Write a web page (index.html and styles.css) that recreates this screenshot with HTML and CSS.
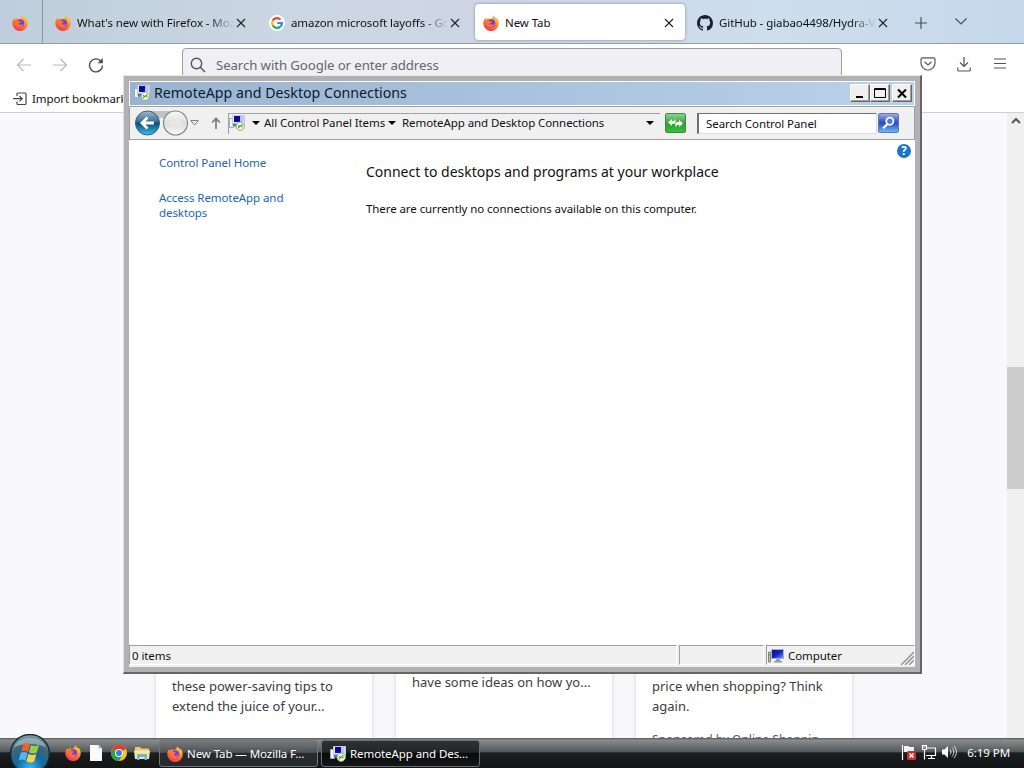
FILE: index.html
```
<!DOCTYPE html>
<html lang="en">
<head>
    <meta charset="UTF-8">
    <meta name="viewport" content="width=device-width, initial-scale=1.0">
    <title>New Tab</title>
    <link rel="stylesheet" href="styles.css">
</head>
<body>
    <!-- shared icons -->
    <svg class="defs" width="0" height="0">
        <defs>
            <linearGradient id="fox" x1="0.8" y1="0" x2="0.3" y2="1">
                <stop offset="0" stop-color="#ffd93b"/>
                <stop offset="0.45" stop-color="#ff8a2a"/>
                <stop offset="1" stop-color="#f0305c"/>
            </linearGradient>
            <linearGradient id="screen" x1="0" y1="0" x2="1" y2="1">
                <stop offset="0" stop-color="#0a0a9a"/>
                <stop offset="0.5" stop-color="#1420b8"/>
                <stop offset="1" stop-color="#7f9bf0"/>
            </linearGradient>
        </defs>
        <symbol id="firefox" viewBox="0 0 16 16">
            <path d="M2.2 3.2 3.6 4.4C4.4 3.4 5 3 5.7 2.9L6 4.2 9.5 3C9.4 1.8 9.8.9 10.6.3c.3 1.6 1.5 2 2.6 3.2.2-.3.2-.6.2-1C15 4.2 15.8 6 15.8 8.3A7.7 7.7 0 0 1 .3 8.4C.3 6.3 1 4.5 2.2 3.2z" fill="url(#fox)"/>
            <circle cx="8.3" cy="8.2" r="3.9" fill="#7542d5"/>
            <path d="M2.8 5.8c1.6-.9 3.3-.6 4.3.5l1.8.2c.1.9-.8 1.1-1.9 1.4-.5 1.2.6 2.2 2 1.9 1.1-.1 1.6-.8 2.5-.4-.8 2-2.6 3.1-4.7 2.7-2.5-.4-4.2-2.7-4-6.3z" fill="#ff7134"/>
            <path d="M9.2 3.3c3 .4 4.2 2.6 3.6 5.4 1.2-1.3 1.3-3.5.3-5.2L10.5 1z" fill="#ffb52e"/>
        </symbol>
        <symbol id="remote" viewBox="0 0 16 16">
            <path d="M.5 3.500h4v9h-4z" fill="#f2f4f8" stroke="#a3abba"/>
            <path d="M3.500.5h12v10h-12z" fill="#e8ebf2" stroke="#c3c9d6"/>
            <path d="M5 1h6v6H5z" fill="#0a0a9c"/>
            <path d="M11 1h3.500v6H11z" fill="#b9c4ee"/>
            <path d="M4 8.500h5v3H4z" fill="#5670cc"/>
            <circle cx="11.200" cy="11.200" r="4.200" fill="#f2f8ec" stroke="#84ab6c"/>
            <path d="m9 10.300 1.700 1.300L9 13m4.500-3.700-1.700 1.400 1.700 1.400" fill="none" stroke="#3f9c20" stroke-width="1.100"/>
        </symbol>
        <symbol id="close" viewBox="0 0 10 10">
            <path d="m1 1 8 8m0-8-8 8" stroke="#222" stroke-width="1.1"/>
        </symbol>
        <symbol id="down" viewBox="0 0 8 4">
            <path d="M0 0h8L4 4z"/>
        </symbol>
    </svg>

    <div class="browser">
        <div class="tabs">
            <div class="tab pinned"><svg class="icon"><use href="#firefox"/></svg></div>
            <div class="tab">
                <svg class="icon"><use href="#firefox"/></svg>
                <span class="tab-title fade">What's new with Firefox - Moz</span>
                <svg class="close"><use href="#close"/></svg>
            </div>
            <div class="tab">
                <svg class="icon" viewBox="0 0 16 16">
                    <circle cx="8" cy="8" r="8" fill="#fff"/>
                    <g fill="none" stroke-width="2.2">
                        <path d="M3.7 5.7A4.9 4.9 0 0 1 11.5 4.6" stroke="#ea4335"/>
                        <path d="M3.7 10.3a4.9 4.9 0 0 1 0-4.6" stroke="#fbbc05"/>
                        <path d="M11.3 11.6a4.9 4.9 0 0 1-7.6-1.3" stroke="#34a853"/>
                        <path d="M8.2 8h4.7c0 1.5-.6 2.8-1.6 3.6" stroke="#4285f4"/>
                    </g>
                </svg>
                <span class="tab-title fade">amazon microsoft layoffs - Go</span>
                <svg class="close"><use href="#close"/></svg>
            </div>
            <div class="tab active">
                <svg class="icon"><use href="#firefox"/></svg>
                <span class="tab-title">New Tab</span>
                <svg class="close"><use href="#close"/></svg>
            </div>
            <div class="tab">
                <svg class="icon" viewBox="0 0 16 16">
                    <path fill="#1b2330" d="M8 0C3.58 0 0 3.58 0 8c0 3.54 2.29 6.53 5.47 7.59.4.07.55-.17.55-.38 0-.19-.01-.82-.01-1.49-2.01.37-2.53-.49-2.69-.94-.09-.23-.48-.94-.82-1.13-.28-.15-.68-.52-.01-.53.63-.01 1.08.58 1.23.82.72 1.21 1.87.87 2.33.66.07-.52.28-.87.51-1.07-1.78-.2-3.64-.89-3.64-3.95 0-.87.31-1.59.82-2.15-.08-.2-.36-1.02.08-2.12 0 0 .67-.21 2.2.82.64-.18 1.32-.27 2-.27s1.36.09 2 .27c1.53-1.04 2.2-.82 2.2-.82.44 1.1.16 1.92.08 2.12.51.56.82 1.27.82 2.15 0 3.07-1.87 3.75-3.65 3.95.29.25.54.73.54 1.48 0 1.07-.01 1.93-.01 2.2 0 .21.15.46.55.38A8.01 8.01 0 0 0 16 8c0-4.42-3.58-8-8-8z"/>
                </svg>
                <span class="tab-title fade">GitHub - giabao4498/Hydra-V</span>
                <svg class="close"><use href="#close"/></svg>
            </div>
            <svg class="plus" viewBox="0 0 12 12"><path d="M6 0v12M0 6h12" stroke="#4b525b" stroke-width="1.2"/></svg>
            <svg class="all-tabs" viewBox="0 0 12 7"><path d="m.5.5 5.5 5.5L11.500.5" fill="none" stroke="#4b525b" stroke-width="1.2"/></svg>
        </div>

        <div class="nav">
            <svg class="nav-icon back" viewBox="0 0 16 16"><path d="M15 8H1.500M7.500 2l-6 6 6 6" fill="none" stroke="#b9b9bc" stroke-width="1.200"/></svg>
            <svg class="nav-icon forward" viewBox="0 0 16 16"><path d="M1 8h13.500M8.500 2l6 6-6 6" fill="none" stroke="#b9b9bc" stroke-width="1.200"/></svg>
            <svg class="nav-icon reload" viewBox="0 0 16 16"><path d="M13 4.200A6.500 6.500 0 1 0 14.500 8.500" fill="none" stroke="#4a4a4f" stroke-width="1.400"/><path d="M14.800 1v5.200H9.600z" fill="#4a4a4f"/></svg>
            <div class="url">
                <svg class="search-icon" viewBox="0 0 16 16"><path d="m10 10 5 5" stroke="#55555d" stroke-width="1.400"/><circle cx="6.500" cy="6.500" r="5.200" fill="none" stroke="#55555d" stroke-width="1.400"/></svg>
                <span>Search with Google or enter address</span>
            </div>
            <svg class="pocket" viewBox="0 0 16 14"><path d="M2.500.8h11c.8 0 1.500.7 1.500 1.500V6A7 7 0 0 1 1 6V2.300C1 1.500 1.700.8 2.500.8zM4.500 4.800 8 8l3.500-3.200" fill="none" stroke="#55555b" stroke-width="1.200"/></svg>
            <svg class="download" viewBox="0 0 14 16"><path d="M7 1v9.500M3 6.500l4 4 4-4M.8 11.500V14c0 .6.400 1 1 1h10.400c.6 0 1-.4 1-1v-2.500" fill="none" stroke="#55555b" stroke-width="1.200"/></svg>
            <svg class="menu" viewBox="0 0 12 11"><path d="M0 1h12M0 5.500h12M0 10h12" stroke="#55555b" stroke-width="1.200"/></svg>
        </div>

        <div class="bookmarks">
            <svg viewBox="0 0 14 14"><path d="M4 4V2c0-.6.400-1 1-1h7c.6 0 1 .4 1 1v9.500c0 .6-.4 1-1 1H5c-.6 0-1-.4-1-1v-2M0 6.700h9M6.500 4 9.200 6.700 6.500 9.400" fill="none" stroke="#44444a" stroke-width="1.200"/></svg>
            <span>Import bookmarks...</span>
        </div>

        <div class="page">
            <div class="cards">
                <div class="card"><p>these power-saving tips to<br>extend the juice of your...</p></div>
                <div class="card raised"><p>have some ideas on how yo...</p></div>
                <div class="card"><p>price when shopping? Think<br>again.</p><p class="sponsor">Sponsored by Online Shoppin</p></div>
            </div>
            <div class="scrollbar">
                <svg class="arrow" viewBox="0 0 10 6"><path d="m1 5 4-4 4 4" fill="none" stroke="#555" stroke-width="2"/></svg>
                <div class="thumb"></div>
                <svg class="arrow" viewBox="0 0 10 6"><path d="m1 1 4 4 4-4" fill="none" stroke="#555" stroke-width="2"/></svg>
            </div>
        </div>
    </div>

    <div class="window">
        <div class="titlebar">
            <svg class="icon"><use href="#remote"/></svg>
            <span class="window-title">RemoteApp and Desktop Connections</span>
            <div class="win-btn"><svg viewBox="0 0 12 12"><path d="M2 10h7" stroke="#000" stroke-width="2"/></svg></div>
            <div class="win-btn"><svg viewBox="0 0 12 12"><path d="M.5 1.500h11v9H.5zM0 2.500h12" fill="none" stroke="#000"/></svg></div>
            <div class="win-btn last"><svg viewBox="0 0 12 12"><path d="m2 2.500 8 8m0-8-8 8" stroke="#000" stroke-width="2"/></svg></div>
        </div>
        <div class="toolbar">
            <div class="history">
                <svg viewBox="0 0 54 28">
                    <defs>
                        <linearGradient id="blue" x1="0" y1="0" x2="0" y2="1">
                            <stop offset="0" stop-color="#9fb9c9"/>
                            <stop offset="0.45" stop-color="#347197"/>
                            <stop offset="0.5" stop-color="#0b4c7c"/>
                            <stop offset="1" stop-color="#36c1ea"/>
                        </linearGradient>
                        <linearGradient id="silver" x1="0" y1="0" x2="0" y2="1">
                            <stop offset="0" stop-color="#fafafa"/>
                            <stop offset="0.5" stop-color="#dedede"/>
                            <stop offset="1" stop-color="#f8f8f8"/>
                        </linearGradient>
                    </defs>
                    <path d="M13 2h28v7H13z" fill="#c2c2c2"/>
                    <circle cx="13.500" cy="14" r="12" fill="url(#blue)" stroke="#3d5c70"/>
                    <circle cx="41.500" cy="14" r="12" fill="url(#silver)" stroke="#858585" stroke-width="1.200"/>
                    <path d="M20 14H8m5.500-5.500L8 14l5.500 5.500" fill="none" stroke="#fff" stroke-width="2.800"/>
                    <path d="M36 14h10m-4-4 4 4-4 4" fill="none" stroke="#e9e9e9" stroke-width="2"/>
                </svg>
                <svg class="recent" viewBox="0 0 9 6"><path d="M.8.600h7.400L4.500 5z" fill="#fff" stroke="#777"/></svg>
                <svg class="up" viewBox="0 0 10 12"><path d="M5 12V2M1.200 5.500 5 1.500l3.800 4" fill="none" stroke="#777" stroke-width="1.600"/></svg>
            </div>
            <div class="address">
                <svg class="icon"><use href="#remote"/></svg>
                <svg class="caret c1"><use href="#down"/></svg>
                <span class="crumb1">All Control Panel Items</span>
                <svg class="caret c2"><use href="#down"/></svg>
                <span class="crumb2">RemoteApp and Desktop Connections</span>
                <svg class="caret c3"><use href="#down"/></svg>
            </div>
            <div class="square green"><svg viewBox="0 0 17 16"><path d="M1 7.500 5 4v2h1.500c1 0 1.300-.8 1.300-2.500 1.500 2.500 1 5.500-1.300 5.500H5v2zM16 8.500 12 12v-2h-1.500c-1 0-1.300.8-1.300 2.500-1.500-2.500-1-5.500 1.300-5.500H12V5z" fill="#fff"/></svg></div>
            <div class="search">Search Control Panel</div>
            <div class="square blue"><svg viewBox="0 0 18 18"><circle cx="10.500" cy="7" r="4" fill="#4d79dd" stroke="#fff" stroke-width="2"/><path d="m8 10-5 5" stroke="#fff" stroke-width="2.500"/></svg></div>
        </div>
        <div class="content">
            <div class="side">
                <a class="link1">Control Panel Home</a>
                <a class="link2">Access RemoteApp and<br>desktops</a>
            </div>
            <div class="main">
                <h1>Connect to desktops and programs at your workplace</h1>
                <p>There are currently no connections available on this computer.</p>
            </div>
            <div class="help">?</div>
        </div>
        <div class="status">
            <div class="cell items">0 items</div>
            <div class="cell empty"></div>
            <div class="cell computer">
                <svg class="pc" viewBox="0 0 16 16"><path d="M.5 4h2v10h-2z" fill="#b9c7b9" stroke="#7c8a7c"/><path d="M0 7h3" stroke="#38a838"/><path d="M3.500 1.500h12v9h-12z" fill="url(#screen)" stroke="#a9b4c8"/><path d="M8 11h4v2H8zM6 13h8v1.500H6z" fill="#8f9bb0"/></svg>
                <span>Computer</span>
                <svg class="grip" viewBox="0 0 14 14"><path d="M1 14 14 1M5 14l9-9M9 14l5-5" stroke="#8e8e8e" stroke-width="1.400"/></svg>
            </div>
        </div>
    </div>

    <div class="taskbar">
        <div class="start">
            <svg viewBox="0 0 42 34">
                <defs>
                    <radialGradient id="orb" cx="0.5" cy="0.85" r="0.85">
                        <stop offset="0" stop-color="#35b9ef"/>
                        <stop offset="0.4" stop-color="#14679f"/>
                        <stop offset="0.7" stop-color="#416476"/>
                        <stop offset="1" stop-color="#8aa0a8"/>
                    </radialGradient>
                </defs>
                <circle cx="21" cy="20" r="19.500" fill="url(#orb)" stroke="#102b3c" stroke-width="1.500"/>
                <path d="M5 13C11 1 31 1 37 13 29 9 13 9 5 13z" fill="#bdd0d4" opacity=".55"/>
                <path d="M14.500 10c2.500-1.500 4.500-1 6.500.300l-2 7.700c-2-1.500-4.300-1.600-6.700-.5z" fill="#f0602a"/>
                <path d="M22 11c2.500 1.500 5 1.500 8-.2l-2.200 7.700c-2.600 1.500-5.300 1.300-7.800-.3z" fill="#98cf48"/>
                <path d="M11.700 18.800c2.500-1.200 4.800-1 6.800.4l-2 7.300c-2-1.300-4.500-1.300-6.800 0z" fill="#54b7ed"/>
                <path d="M19.500 19.800c2.500 1.500 5.200 1.700 7.800.2l-2.100 7.500c-2.600 1.500-5.300 1.300-7.700-.3z" fill="#fdd440"/>
            </svg>
        </div>
        <div class="quick">
            <svg class="icon"><use href="#firefox"/></svg>
            <svg class="icon" viewBox="0 0 16 16"><path d="M2 0h8.500L14 3.500V16H2z" fill="#fafafa"/><path d="M10.500 0v3.500H14z" fill="#bbb"/></svg>
            <svg class="icon" viewBox="0 0 16 16">
                <circle cx="8" cy="8" r="8" fill="#f5c51d"/>
                <path d="M8 8 1.100 4A8 8 0 0 1 14.900 4z" fill="#e33b2e"/>
                <path d="M1.100 4A8 8 0 0 0 8 16l3.500-6L8 8z" fill="#2ca14c"/>
                <circle cx="8" cy="8" r="4" fill="#fff"/>
                <circle cx="8" cy="8" r="3" fill="#3b7de8"/>
            </svg>
            <svg class="icon" viewBox="0 0 16 16"><path d="M1 2h5l1.500 1.500H15V14H1z" fill="#e6c970"/><path d="M0 5.500h16L15 14H1z" fill="#f6e7a5"/><path d="M3 9h10v6h-2.500v-3h-5v3H3z" fill="#67b6dc"/></svg>
        </div>
        <div class="task"><svg class="icon"><use href="#firefox"/></svg><span>New Tab — Mozilla F...</span></div>
        <div class="task current"><svg class="icon"><use href="#remote"/></svg><span>RemoteApp and Des...</span></div>
        <div class="tray">
            <svg viewBox="0 0 16 16"><path d="M1.500 1v15" stroke="#fff" stroke-width="1.200"/><path d="M3 2h4l2 1h4v6H9L7 8H3z" fill="#f5f5f5"/><rect x="6" y="7" width="9" height="9" rx="1.500" fill="#d42b22"/><path d="m8.500 9.500 4 4m0-4-4 4" stroke="#fff" stroke-width="1.500"/></svg>
            <svg viewBox="0 0 16 16"><path d="M6 4h8.500v7.500H5M7 14.500h7M10.500 12v2.500M1.500 1.500h4v4h-4zM3.500 5.500v10M2.500 3h2" fill="none" stroke="#fff" stroke-width="1.200"/></svg>
            <svg viewBox="0 0 16 16"><path d="M1 5.500h2.500L7 2v12l-3.500-3.500H1z" fill="#fff"/><path d="M9 5.500c1.300 1.500 1.300 3.500 0 5M11 3.500c2.400 2.700 2.400 6.300 0 9M13 2c3.200 3.500 3.200 8.500 0 12" fill="none" stroke="#ddd"/></svg>
            <span class="clock">6:19 PM</span>
        </div>
    </div>
</body>
</html>
```
FILE: styles.css
```
* {
    box-sizing: border-box;
}
body {
    margin: 0px;
    width: 1024px;
    height: 768px;
    overflow: hidden;
    position: relative;
    font-family: "Noto Sans", "Open Sans", sans-serif;
    font-size: 11.5px;
    letter-spacing: -.08px;
    line-height: 16px;
    color: #111;
    white-space: nowrap;
}
p, h1 {
    margin: 0px;
    font-weight: normal;
}
svg {
    display: block;
    flex: none;
}
.defs {
    position: absolute;
}
.icon {
    width: 16px;
    height: 16px;
}

/* browser */
.browser {
    height: 738px;
    display: flex;
    flex-direction: column;
    overflow: hidden;
    background: #f9f9fb;
}
.tabs {
    height: 44px;
    flex: none;
    display: flex;
    align-items: center;
    border-bottom: 1px solid #929da9;
    background: linear-gradient(90deg, #bfcddc, #cbd7e2 30%, #cfd5e8 55%, #cddeec 75%, #c5d8eb);
}
.tab {
    height: 43px;
    width: 214px;
    display: flex;
    align-items: center;
    padding: 2px 11px 0px 12px;
}
.tab.pinned {
    width: 43px;
    border-right: 1px solid #8c98a6;
}
.tab.active {
    width: 210px;
    height: 36px;
    margin-left: 4px;
    padding-left: 8px;
    border-radius: 4px;
    background: #fff;
    box-shadow: 0px 0px 3px rgba(70, 80, 110, .6);
}
.tab-title {
    flex: 1;
    margin-left: 6px;
    overflow: hidden;
}
.fade {
    -webkit-mask-image: linear-gradient(90deg, #000 calc(100% - 26px), transparent);
    mask-image: linear-gradient(90deg, #000 calc(100% - 26px), transparent);
}
.close {
    width: 10px;
    height: 10px;
    margin-left: 2px;
}
.plus {
    width: 12px;
    height: 12px;
    margin: 2px 0px 0px 16px;
}
.all-tabs {
    width: 12px;
    height: 7px;
    margin-left: 28px;
}
.nav {
    height: 41px;
    flex: none;
    display: flex;
    align-items: center;
    background: #fff;
    padding-left: 16px;
}
.nav-icon {
    width: 16px;
    height: 16px;
    margin-right: 20px;
}
.url {
    width: 660px;
    height: 33px;
    margin-left: 58px;
    border: 1px solid #999da5;
    border-radius: 4px;
    background: #f0f0f4;
    display: flex;
    align-items: center;
    font-size: 13.2px;
    color: #66666f;
}
.search-icon {
    width: 16px;
    height: 16px;
    margin: 0px 10px 0px 7px;
}
.pocket {
    width: 16px;
    height: 14px;
    margin: 0px 0px 2px 78px;
}
.download {
    width: 14px;
    height: 16px;
    margin: 0px 0px 2px 21px;
}
.menu {
    width: 12px;
    height: 11px;
    margin: 0px 0px 2px 23px;
}
.bookmarks {
    height: 28px;
    flex: none;
    display: flex;
    align-items: center;
    padding-left: 13px;
    gap: 5px;
    background: #fff;
    border-bottom: 1px solid #cfcfd4;
}
.bookmarks svg {
    width: 14px;
    height: 14px;
}
.page {
    flex: 1;
    display: flex;
    justify-content: space-between;
}
.cards {
    display: flex;
    gap: 24px;
    padding: 500px 0px 0px 156px;
}
.card {
    width: 216px;
    padding: 63px 16px 0px;
    background: #fff;
    box-shadow: 0px 0px 4px rgba(58, 57, 68, .2);
    font-size: 13px;
    letter-spacing: 0px;
    line-height: 20px;
    color: #3c3b43;
}
.card.raised {
    padding-top: 59px;
}
.sponsor {
    margin-top: 14px;
    font-size: 12px;
    color: #5b5b66;
}
.scrollbar {
    width: 17px;
    display: flex;
    flex-direction: column;
    align-items: center;
    justify-content: space-between;
    padding: 5px 0px;
    background: #f0f0f0;
}
.arrow {
    width: 10px;
    height: 6px;
}
.thumb {
    width: 17px;
    height: 122px;
    margin-bottom: 7px;
    background: #cdcdcd;
}

/* control panel window */
.window {
    position: absolute;
    left: 123px;
    top: 75px;
    width: 799px;
    height: 599px;
    padding: 5px;
    border: 1px solid;
    border-width: 1px 2px 2px 1px;
    border-color: #e8e8e8 #666 #666 #e0e0e0;
    background: #b2b2b2;
    display: flex;
    flex-direction: column;
}
.titlebar {
    height: 25px;
    flex: none;
    display: flex;
    align-items: center;
    padding: 0px 2px 1px 4px;
    border: 1px solid #fff;
    background: linear-gradient(90deg, #99b4d1, #b9d1ea);
}
.window-title {
    flex: 1;
    margin-left: 4px;
    font-size: 14.2px;
    letter-spacing: 0px;
    line-height: 20px;
    color: #0c1a2c;
}
.win-btn {
    width: 20px;
    height: 18px;
    display: flex;
    align-items: center;
    justify-content: center;
    background: #f0f0f0;
    border: 1px solid;
    border-color: #fff #696969 #696969 #fff;
    box-shadow: inset -1px -1px 0px #a0a0a0;
}
.win-btn.last {
    margin-left: 2px;
}
.win-btn svg {
    width: 12px;
    height: 12px;
}
.toolbar {
    height: 34px;
    flex: none;
    display: flex;
    align-items: center;
    padding: 0px 13px 0px 4px;
    background: #f0f0f0;
    border: 1px solid #a0a0a0;
}
.history {
    display: flex;
    align-items: center;
    width: 94px;
}
.history svg:first-child {
    width: 54px;
    height: 28px;
}
.recent {
    width: 9px;
    height: 6px;
    margin-left: 2px;
}
.up {
    width: 10px;
    height: 12px;
    margin-left: 12px;
}
.address {
    width: 432px;
    height: 21px;
    display: flex;
    align-items: center;
    padding-bottom: 1px;
    border: 1px solid #a0a0a0;
    border-width: 1px 0px 0px 1px;
}
.caret {
    width: 8px;
    height: 4px;
}
.c1 {
    margin: 0px 4px 0px 7px;
}
.crumb1 {
    width: 124px;
}
.crumb2 {
    flex: 1;
    margin-left: 6px;
}
.c3 {
    margin-right: 6px;
}
.square {
    width: 21px;
    height: 20px;
    padding: 1px;
    border-radius: 2px;
}
.green {
    margin-left: 5px;
    background: linear-gradient(#8ed18c, #2ba32d 55%, #36c237);
    border: 1px solid #4b814b;
}
.blue {
    margin-left: 1px;
    background: linear-gradient(#9aace8, #2747bd 50%, #65bdf6);
    border: 1px solid #6178a4;
}
.square svg {
    width: 17px;
    height: 16px;
}
.search {
    width: 180px;
    height: 21px;
    margin-left: 11px;
    padding-left: 7px;
    line-height: 19px;
    background: #fff;
    border: 1px solid #707070;
    border-right-color: #ddd;
    border-bottom-color: #ddd;
    border-left-width: 2px;
}
.content {
    flex: 1;
    display: flex;
    background: #fff;
}
.side {
    width: 237px;
    padding: 15px 0px 0px 30px;
}
.side a {
    display: block;
    color: #2265b7;
    line-height: 15px;
}
.link2 {
    margin-top: 20px;
}
.main {
    flex: 1;
    padding-top: 21px;
}
.main h1 {
    font-size: 14px;
    letter-spacing: 0px;
    line-height: 22px;
}
.main p {
    margin-top: 18px;
}
.help {
    width: 14px;
    height: 14px;
    margin: 4px 4px 0px 0px;
    border-radius: 50%;
    background: #1c74c4;
    color: #fff;
    font-weight: bold;
    line-height: 14px;
    text-align: center;
}
.status {
    height: 22px;
    flex: none;
    display: flex;
    gap: 2px;
    background: #f0f0f0;
}
.cell {
    height: 20px;
    padding-top: 2px;
    border: 1px solid #a0a0a0;
    border-color: #a0a0a0 #fff #fff #a0a0a0;
    display: flex;
    align-items: center;
}
.items {
    width: 548px;
    padding-left: 2px;
}
.empty {
    width: 85px;
}
.computer {
    flex: 1;
}
.computer span {
    flex: 1;
    margin-left: 4px;
}
.pc {
    width: 16px;
    height: 16px;
    margin-left: 1px;
}
.grip {
    width: 14px;
    height: 14px;
    margin-top: 3px;
}

/* taskbar */
.taskbar {
    height: 30px;
    display: flex;
    align-items: center;
    color: #fff;
    background: linear-gradient(#55585a, #8a8c8d 7%, #56595b 45%, #1b1e20 50%, #121415);
    position: relative;
}
.start {
    width: 65px;
    height: 30px;
}
.start svg {
    width: 42px;
    height: 34px;
    position: absolute;
    left: 9px;
    top: -4px;
}
.quick {
    display: flex;
    gap: 7px;
    width: 93px;
}
.task {
    width: 159px;
    height: 27px;
    margin: 1px 2px 0px 1px;
    padding-left: 7px;
    display: flex;
    align-items: center;
    gap: 4px;
    border: 1px solid #737678;
    border-radius: 3px;
    background: linear-gradient(#777a7c, #505355 45%, #292c2e 50%, #26292b);
}
.task.current {
    padding-left: 8px;
    border-color: #6a6c6e;
    background: linear-gradient(#2e3032, #232526 45%, #08090a 50%, #151617);
}
.tray {
    margin-left: auto;
    padding-right: 14px;
    display: flex;
    align-items: center;
    gap: 4px;
}
.tray svg {
    width: 16px;
    height: 16px;
    margin-bottom: 2px;
}
.clock {
    margin-left: 6px;
}
```
